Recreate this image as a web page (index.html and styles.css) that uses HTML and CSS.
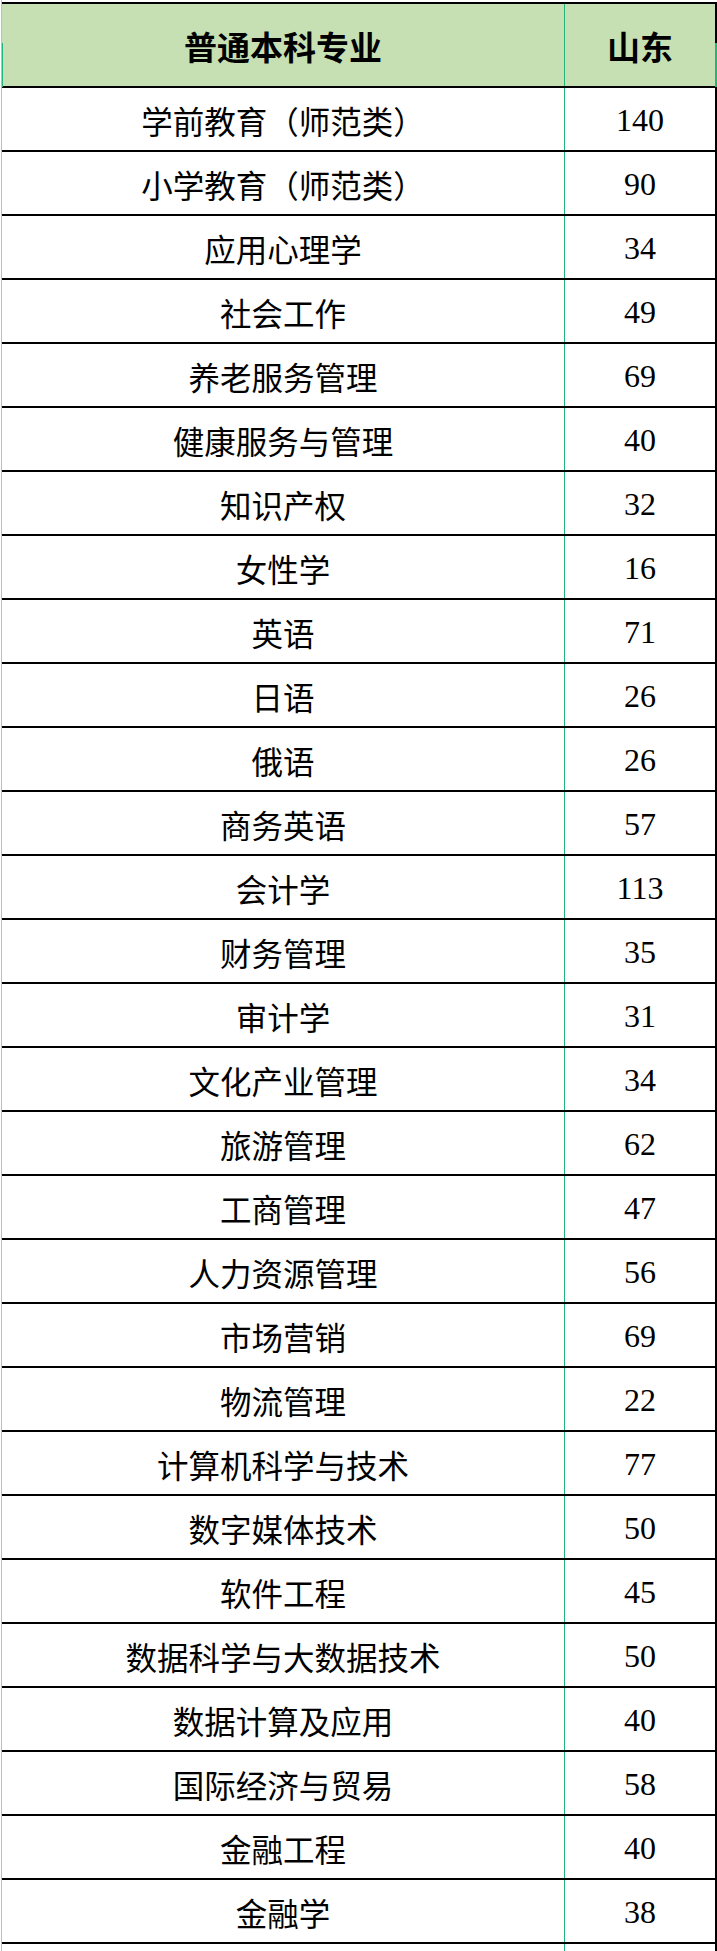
FILE: index.html
```html
<!DOCTYPE html>
<html lang="zh-CN">
<head>
<meta charset="utf-8">
<title>普通本科专业 山东</title>
<link rel="stylesheet" href="styles.css">
</head>
<body>
<div class="sheet">
  <span class="mark mark-left"></span>
  <span class="mark mark-right"></span>
  <div class="table">
    <div class="row head">
      <div class="cell name">普通本科专业</div>
      <div class="cell num">山东</div>
    </div>
    <div class="row"><div class="cell name">学前教育（师范类）</div><div class="cell num">140</div></div>
    <div class="row"><div class="cell name">小学教育（师范类）</div><div class="cell num">90</div></div>
    <div class="row"><div class="cell name">应用心理学</div><div class="cell num">34</div></div>
    <div class="row"><div class="cell name">社会工作</div><div class="cell num">49</div></div>
    <div class="row"><div class="cell name">养老服务管理</div><div class="cell num">69</div></div>
    <div class="row"><div class="cell name">健康服务与管理</div><div class="cell num">40</div></div>
    <div class="row"><div class="cell name">知识产权</div><div class="cell num">32</div></div>
    <div class="row"><div class="cell name">女性学</div><div class="cell num">16</div></div>
    <div class="row"><div class="cell name">英语</div><div class="cell num">71</div></div>
    <div class="row"><div class="cell name">日语</div><div class="cell num">26</div></div>
    <div class="row"><div class="cell name">俄语</div><div class="cell num">26</div></div>
    <div class="row"><div class="cell name">商务英语</div><div class="cell num">57</div></div>
    <div class="row"><div class="cell name">会计学</div><div class="cell num">113</div></div>
    <div class="row"><div class="cell name">财务管理</div><div class="cell num">35</div></div>
    <div class="row"><div class="cell name">审计学</div><div class="cell num">31</div></div>
    <div class="row"><div class="cell name">文化产业管理</div><div class="cell num">34</div></div>
    <div class="row"><div class="cell name">旅游管理</div><div class="cell num">62</div></div>
    <div class="row"><div class="cell name">工商管理</div><div class="cell num">47</div></div>
    <div class="row"><div class="cell name">人力资源管理</div><div class="cell num">56</div></div>
    <div class="row"><div class="cell name">市场营销</div><div class="cell num">69</div></div>
    <div class="row"><div class="cell name">物流管理</div><div class="cell num">22</div></div>
    <div class="row"><div class="cell name">计算机科学与技术</div><div class="cell num">77</div></div>
    <div class="row"><div class="cell name">数字媒体技术</div><div class="cell num">50</div></div>
    <div class="row"><div class="cell name">软件工程</div><div class="cell num">45</div></div>
    <div class="row"><div class="cell name">数据科学与大数据技术</div><div class="cell num">50</div></div>
    <div class="row"><div class="cell name">数据计算及应用</div><div class="cell num">40</div></div>
    <div class="row"><div class="cell name">国际经济与贸易</div><div class="cell num">58</div></div>
    <div class="row"><div class="cell name">金融工程</div><div class="cell num">40</div></div>
    <div class="row"><div class="cell name">金融学</div><div class="cell num">38</div></div>
    <div class="row tail"><div class="cell name"></div><div class="cell num"></div></div>
  </div>
</div>
</body>
</html>
```
FILE: styles.css
```css
html, body {
  margin: 0;
  padding: 0;
  background: #ffffff;
}

.sheet {
  position: relative;
  width: 716px;
  height: 1951px;
  margin-left: 1px;
  border-left: 1px solid #b6bdcb;
  box-sizing: border-box;
  overflow: hidden;
  padding-top: 2px;
}

.table {
  width: 715px;
  border-top: 2px solid #000;
  border-right: 2px solid #000;
  box-sizing: border-box;
  display: flex;
  flex-direction: column;
}

.row {
  display: grid;
  grid-template-columns: 563px 150px;
  height: 64px;
  border-bottom: 2px solid #000;
  box-sizing: border-box;
}

.row.head {
  height: 84px;
  background: #c6e0b4;
}

.row.tail {
  height: 20px;
  border-bottom: none;
}

.cell {
  display: flex;
  align-items: center;
  justify-content: center;
  color: #000;
  white-space: nowrap;
  padding-top: 2px;
  box-sizing: border-box;
}

.name {
  border-right: 1px solid #22b47a;
  font-family: "Noto Sans CJK SC", sans-serif;
  font-size: 31.5px;
}

.num {
  font-family: "Liberation Serif", "Noto Sans CJK SC", serif;
  font-size: 32px;
}

.head .cell {
  font-family: "Noto Sans CJK SC", sans-serif;
  font-size: 33px;
  font-weight: 700;
  padding-top: 2px;
}

.mark {
  position: absolute;
  top: 43px;
  width: 2px;
  height: 44px;
  background: #22b47a;
  z-index: 2;
}

.mark-left {
  left: -1px;
}

.mark-right {
  right: 0;
}
```
